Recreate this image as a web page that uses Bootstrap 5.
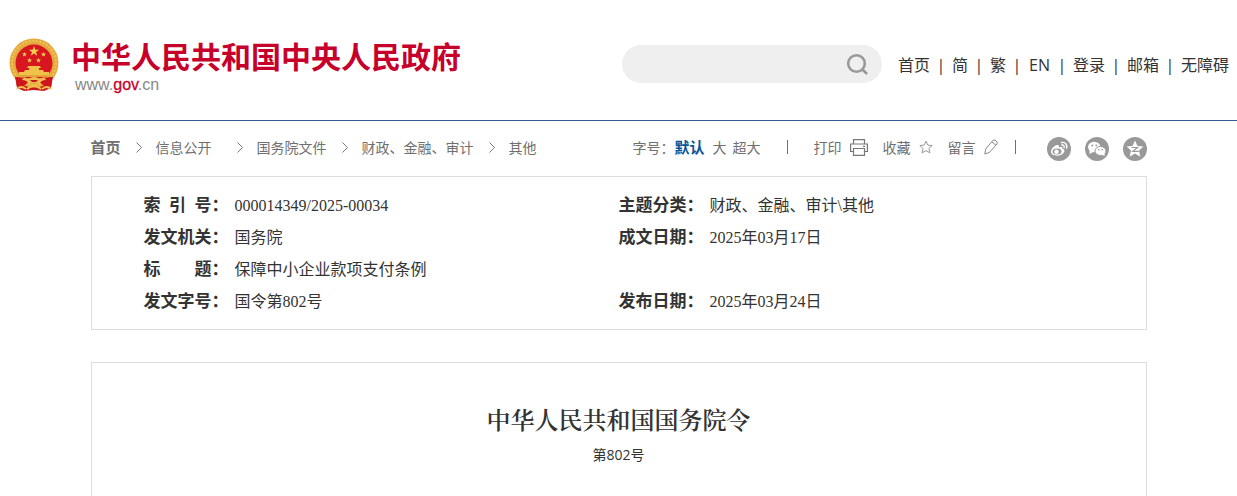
<!DOCTYPE html>
<html lang="zh-CN">
<head>
<meta charset="utf-8">
<meta name="viewport" content="width=device-width, initial-scale=1">
<title>保障中小企业款项支付条例</title>
<link href="https://cdn.jsdelivr.net/npm/bootstrap@5.3.0/dist/css/bootstrap.min.css" rel="stylesheet">
<style>
body{font-family:"Open Sans","Noto Sans CJK SC",sans-serif;font-size:16px;color:#333;background:#fff}
a{color:inherit;text-decoration:none}
svg{display:block;flex:none}
.site-head{min-height:121px;border-bottom:1px solid #2f5f94;padding:10px 8px 0 9px}
.brand-text{margin-left:12px}
.brand-name{font-family:"Noto Sans CJK SC",sans-serif;font-size:30px;font-weight:700;line-height:40px;color:#c7002b}
.brand-url{font-family:"Liberation Sans",sans-serif;font-size:16px;line-height:20px;color:#888;padding-left:4px}
.brand-url b{color:#c7002b;font-weight:400;-webkit-text-stroke:.3px #c7002b}
.search-pill{width:260px;height:38px;border-radius:19px;background:#efefef;padding:0 14px 0 16px;margin:0 16px 2px 0}
.search-pill input{min-width:0;background:none;border:0;outline:0}
.search-pill button{background:none;border:0;padding:0}
.top-links{line-height:24px;white-space:nowrap}
.top-links span{width:22px;text-align:center}
.top-links .lang-en,.top-links .login{padding:0 1px}
.page-wrap{max-width:1056px;width:100%}
.tools-row{height:55px;font-size:14px;line-height:20px;color:#707070;white-space:nowrap;font-family:"Noto Sans CJK SC",sans-serif}
.tools-row b{font-size:15px}
.crumbs{padding-bottom:3px}
.crumbs svg{margin:0 14px 0 15px}
.crumbs .wide-sep{margin-left:25px}
.tools-row button{background:none;border:0;padding:0;color:inherit;line-height:20px}
.tools-row .size-on{color:#0a5596}
.text-tools{padding-bottom:3px}
.size-xl{margin-left:6px}
.tool-btn{margin-right:15px}
.tool-last{margin-right:17px}
.vbar{width:1px;height:14px;background:#707070}
.vbar-mid{margin:0 26px}
.share-links{gap:14px;margin-left:31px}
.panel{border:1px solid #ddd}
.meta-panel{padding:13px 52px 11px}
.meta-panel table{width:100%;table-layout:fixed;font-family:"Liberation Serif","Noto Sans CJK SC",serif}
.meta-panel th,.meta-panel td{padding:0;line-height:32px;white-space:nowrap}
.meta-panel th{font-size:17px;font-weight:700}
.col-label{width:91px}
.col-value{width:384px}
.label-box{display:flex;justify-content:space-between;width:68px}
.doc-panel{margin-top:32px;padding-top:42px;font-family:"Liberation Serif","Noto Serif CJK SC","Noto Sans CJK SC",serif}
.doc-panel h1{font-size:24px;line-height:32px;font-weight:600;margin:0}
.doc-panel p{font-family:"Open Sans","Noto Sans CJK SC",sans-serif;font-size:14px;line-height:24px;margin:6px 0 0}
</style>
</head>
<body class="min-vh-100 d-flex flex-column">
<header class="site-head d-flex align-items-center justify-content-between">
  <a href="#" class="d-flex align-items-center">
    <svg width="50" height="54" viewBox="0 0 50 54">
      <path d="M6 34h38l-2 16-7 3-10-1-10 1-7-3z" fill="#c8161d"/>
      <circle cx="25" cy="25" r="24.500" fill="#e5aa3d"/>
      <circle cx="25" cy="25" r="22" fill="none" stroke="#f0c25c" stroke-width="2" stroke-dasharray="2 1.500"/>
      <circle cx="25" cy="25" r="18.500" fill="#d7161f"/>
      <path d="M25 8l1.300 3.700h3.900L27 14l1.200 3.800L25 15.500l-3.200 2.300L23 14l-3.200-2.300h3.900z" fill="#f7cf4d"/>
      <g fill="#f7cf4d"><path id="s" d="M15.500 14l.7 1.600h1.800l-1.400 1.200.5 1.800-1.600-1-1.600 1 .5-1.800-1.400-1.200h1.800z"/><use href="#s" x="19"/><use href="#s" x="5" y="6"/><use href="#s" x="14" y="6"/></g>
      <path d="M19 28h12l1 2h-2v2h4l1 2h5v3H10v-3h5l1-2h4v-2h-2z" fill="#f0c24a"/>
      <path d="M8 37h34l-1 2H9z" fill="#e0a63a"/>
      <path d="M6 39c6 0 10 1 13 5-3 4-6 5-11 5zM44 39c-6 0-10 1-13 5 3 4 6 5 11 5z" fill="#ce141c"/>
      <path d="M15 39q3 2 6 1 4-2 8 0 3 1 6-1l2 3q-5 0-7 4-5-3-10 0-2-4-7-4z" fill="#efc04d"/>
      <path d="M21 42h8l-2 2h-4z" fill="#c8161d"/><path d="M8 51q4-4 9 0M33 51q5-4 9 0M18 51q7-6 14 0" fill="none" stroke="#efc04d" stroke-width="1.800"/>
    </svg>
    <div class="brand-text">
      <div class="brand-name text-nowrap">中华人民共和国中央人民政府</div>
      <div class="brand-url">www.<b>gov</b>.cn</div>
    </div>
  </a>
  <div class="d-flex align-items-center">
    <form class="search-pill d-flex align-items-center" role="search">
      <input class="flex-grow-1" type="text" aria-label="搜索">
      <button type="button" aria-label="搜索"><svg width="22" height="22" viewBox="0 0 22 22" fill="none" stroke="#999" stroke-width="2.600"><circle cx="10.500" cy="10.500" r="8.300"/><path d="M16 16l5 5"/></svg></button>
    </form>
    <nav class="top-links d-flex">
      <a href="#">首页</a><span>|</span><a href="#">简</a><span>|</span><a href="#">繁</a><span>|</span><a href="#" class="lang-en">EN</a><span>|</span><a href="#">登录</a><span>|</span><a href="#">邮箱</a><span>|</span><a href="#">无障碍</a>
    </nav>
  </div>
</header>
<svg width="0" height="0" class="position-absolute"><symbol id="chev" viewBox="0 0 6 11"><path d="M.5.5l5 5-5 5" fill="none" stroke="#777"/></symbol></svg>
<main class="page-wrap mx-auto flex-grow-1 d-flex flex-column">
  <div class="tools-row d-flex align-items-center justify-content-between">
    <nav class="crumbs d-flex align-items-center" aria-label="breadcrumb">
      <a href="#"><b>首页</b></a><svg width="6" height="11"><use href="#chev"/></svg>
      <a href="#">信息公开</a><svg class="wide-sep" width="6" height="11"><use href="#chev"/></svg>
      <a href="#">国务院文件</a><svg width="6" height="11"><use href="#chev"/></svg>
      <a href="#">财政、金融、审计</a><svg width="6" height="11"><use href="#chev"/></svg>
      <a href="#">其他</a>
    </nav>
    <div class="d-flex align-items-center">
      <div class="text-tools d-flex align-items-center">
        <span>字号：</span>
        <button type="button" class="size-on"><b>默认</b></button>
        <button type="button" class="ms-2">大</button>
        <button type="button" class="size-xl">超大</button>
        <i class="vbar vbar-mid"></i>
        <button type="button" class="tool-btn d-flex align-items-center gap-2">打印
          <svg width="18" height="17" viewBox="0 0 18 17" fill="none" stroke="#777" stroke-width="1.200"><path d="M3.500 5V.6h11V5M3.500 12.500H.6V5h16.800v7.500h-2.900M3.500 9.500h11v6.900h-11zM13 7.300h2"/></svg></button>
        <button type="button" class="tool-btn d-flex align-items-center gap-2">收藏
          <svg width="14" height="14" viewBox="0 0 14 14" fill="none" stroke="#999"><path d="M7 1l1.800 4.100 4.400.4-3.300 3 1 4.400L7 10.600 3.100 12.900l1-4.400-3.300-3 4.400-.4z"/></svg></button>
        <button type="button" class="tool-last d-flex align-items-center gap-2">留言
          <svg width="14" height="16" viewBox="0 0 14 16" fill="none" stroke="#888"><path d="M.8 15l.9-5L8.800 1.500Q10 .3 12 1.800T13 5L5.500 13.300zM8 3l4 3.400"/></svg></button>
        <i class="vbar"></i>
      </div>
      <div class="share-links d-flex">
        <a href="#" aria-label="微博"><svg width="24" height="24" viewBox="0 0 24 24"><circle cx="12" cy="12" r="12" fill="#999"/><path d="M4 14.500c0-3 4.500-7 7-6.500 1.500.3 1 2 .8 2.500 2-1 4.300-.8 3.700 1.200 2 .5 2.500 2 1.500 3.600-1.300 2.200-4 3.400-7 3.400-3.500 0-6-1.800-6-4.200z" fill="#fff"/><ellipse cx="10" cy="14.500" rx="4.500" ry="3" fill="#999"/><circle cx="9.500" cy="14.800" r="2.200" fill="#fff"/><path d="M14.500 5.500c3.600-.8 6.200 2.200 5 5.700M14.800 8c1.800-.3 2.700 1 2.300 2.600" fill="none" stroke="#fff" stroke-width="1.400" stroke-linecap="round"/></svg></a>
        <a href="#" aria-label="微信"><svg width="24" height="24" viewBox="0 0 24 24"><circle cx="12" cy="12" r="12" fill="#999"/><ellipse cx="9.200" cy="10" rx="6.200" ry="5.200" fill="#fff"/><path d="M4.500 13v4l3.500-2z" fill="#fff"/><ellipse cx="15.500" cy="14" rx="5.500" ry="4.500" fill="#fff" stroke="#999"/><path d="M17 17.500l2.500 1.800V16z" fill="#fff"/><g fill="#999"><circle cx="7.200" cy="8.500" r=".9"/><circle cx="11.300" cy="8.500" r=".9"/><circle cx="13.700" cy="12.800" r=".8"/><circle cx="17.200" cy="12.800" r=".8"/></g></svg></a>
        <a href="#" aria-label="QQ空间"><svg width="24" height="24" viewBox="0 0 24 24"><circle cx="12" cy="12" r="12" fill="#999"/><path d="M12 3.500l2.500 5.400 5.900.6-4.400 4 1.300 6.200-5.300-3.100-5.300 3.100L8 13.500l-4.400-4 5.900-.6z" fill="#fff"/><path d="M8.500 10.500h6l-4.700 3.800h6" fill="none" stroke="#999" stroke-width="1.200"/></svg></a>
      </div>
    </div>
  </div>
  <section class="panel meta-panel">
    <table>
      <colgroup><col class="col-label"><col class="col-value"><col class="col-label"><col></colgroup>
      <tr><th scope="row"><div class="d-flex"><span class="label-box"><span>索</span><span>引</span><span>号</span></span>：</div></th><td>000014349/2025-00034</td><th scope="row">主题分类：</th><td>财政、金融、审计\其他</td></tr>
      <tr><th scope="row">发文机关：</th><td>国务院</td><th scope="row">成文日期：</th><td>2025年03月17日</td></tr>
      <tr><th scope="row"><div class="d-flex"><span class="label-box"><span>标</span><span>题</span></span>：</div></th><td colspan="3">保障中小企业款项支付条例</td></tr>
      <tr><th scope="row">发文字号：</th><td>国令第802号</td><th scope="row">发布日期：</th><td>2025年03月24日</td></tr>
    </table>
  </section>
  <article class="panel doc-panel border-bottom-0 flex-grow-1 text-center">
    <h1>中华人民共和国国务院令</h1>
    <p>第802号</p>
  </article>
</main>
<script src="https://cdn.jsdelivr.net/npm/bootstrap@5.3.0/dist/js/bootstrap.bundle.min.js"></script>
</body>
</html>
